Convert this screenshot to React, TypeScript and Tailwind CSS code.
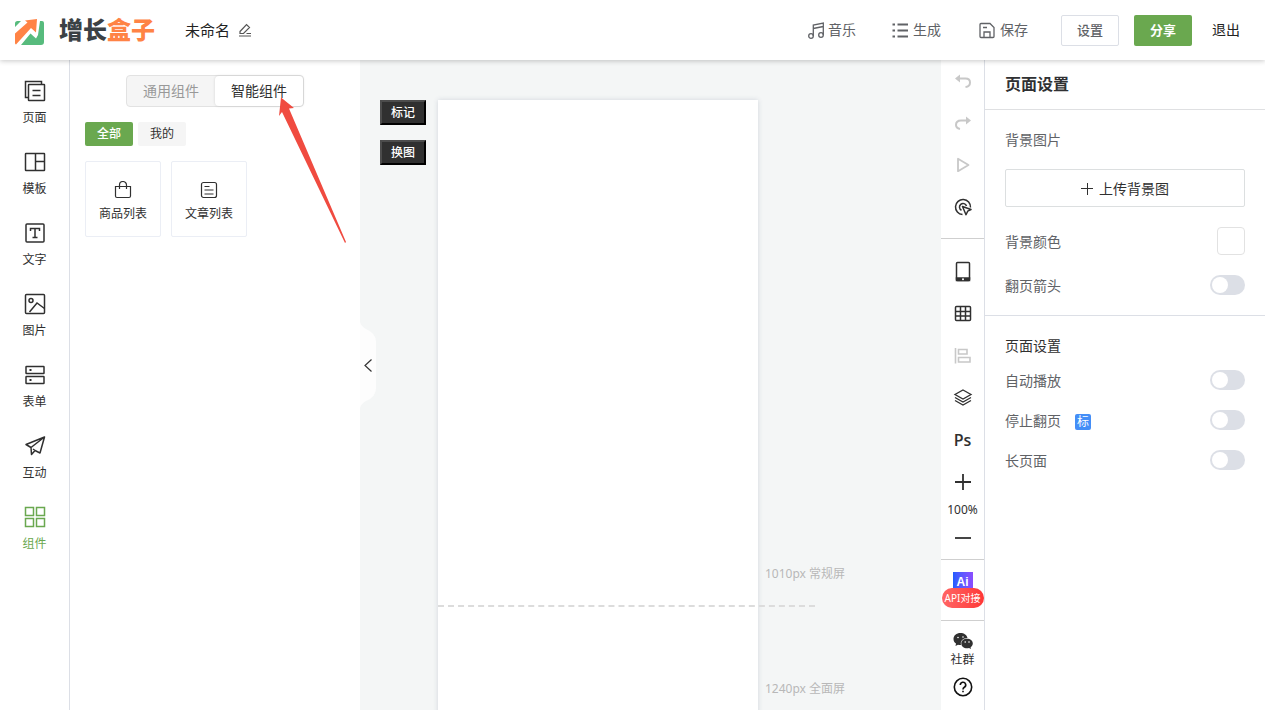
import type { ReactNode } from "react";
import clsx from "clsx";

interface IconProps {
  className?: string;
  box?: number;
  width?: number;
  children: ReactNode;
}

function Icon({ className = "size-5", box = 20, width = 1.5, children }: IconProps) {
  return (
    <svg
      viewBox={`0 0 ${box} ${box}`}
      className={clsx("shrink-0", className)}
      fill="none"
      stroke="currentColor"
      strokeWidth={width}
      aria-hidden="true"
    >
      {children}
    </svg>
  );
}

const NAV_ITEMS: { label: string; icon: ReactNode }[] = [
  {
    label: "页面",
    icon: (
      <>
        <path d="M17.5 4V1.5h-16v16H4" />
        <rect x="4.5" y="4.5" width="16" height="16" rx="0.5" />
        <path d="M8.5 10.5h8M8.5 15.5h8" />
      </>
    ),
  },
  {
    label: "模板",
    icon: (
      <>
        <rect x="1.5" y="2.5" width="19" height="17" rx="0.5" />
        <path d="M11.5 2.5v17M11.5 10.5h9" />
      </>
    ),
  },
  {
    label: "文字",
    icon: (
      <>
        <rect x="2" y="2" width="18" height="18" rx="1" />
        <path d="M6.5 9V6.5h9V9M11 6.5v9M8.5 15.5h5" />
      </>
    ),
  },
  {
    label: "图片",
    icon: (
      <>
        <rect x="1.5" y="1.5" width="19" height="19" rx="1" />
        <circle cx="7" cy="7.5" r="2" />
        <path d="M5.5 19l7.5-9 7.5 5.5" />
      </>
    ),
  },
  {
    label: "表单",
    icon: (
      <>
        <rect x="2" y="2.5" width="18" height="7" rx="0.5" />
        <rect x="2" y="12.5" width="18" height="7" rx="0.5" />
        <path d="M5.5 6h2M5.5 16h2" strokeWidth="2" />
      </>
    ),
  },
  {
    label: "互动",
    icon: (
      <path
        d="M20.5 2L2 9.5l5 3 .5 7 3.500-4 5 2.500 4.500-16L7 12.500M11 15.500l-2-1.500"
        strokeLinejoin="round"
      />
    ),
  },
  {
    label: "组件",
    icon: (
      <>
        <rect x="1.5" y="1.5" width="8" height="8" />
        <rect x="12.5" y="1.5" width="8" height="8" />
        <rect x="1.5" y="12.5" width="8" height="8" />
        <rect x="12.5" y="12.5" width="8" height="8" />
      </>
    ),
  },
];

function Header() {
  return (
    <header className="relative z-10 flex h-[60px] shrink-0 items-center bg-white pr-[25px] pl-[15px] shadow-[0_1px_5px_rgba(0,0,0,0.22)]">
      <svg viewBox="0 0 30 28" className="mt-1 h-7 w-[30px]" aria-hidden="true">
        <path
          d="M0 5.500Q0 3 2.500 3H6L0 9zM25 3h2q2 0 2 2v19q0 3-3 3H6l9.500-11.500 5.500 5 2-3.500z"
          fill="#57bb7d"
        />
        <path d="M10 2.500L22 1l-1 13.500-5-4.500L1 26.500Q0 26 0 25v-9.500L12.500 4.500z" fill="#ff8345" />
      </svg>
      <h1 className="ml-[14px] text-2xl font-black text-[#3b4145]">
        增长<span className="text-[#ff8345]">盒子</span>
      </h1>
      <span className="ml-[30px] text-[15px] text-[#222]">未命名</span>
      <button type="button" aria-label="重命名" className="ml-2 text-[#555]">
        <Icon className="size-[14px]" box={14} width={1.2}>
          <path d="M2 8.500l6.500-7 3 3L5.500 10.500H2zM1 13h12M8.500 10.500H13" />
        </Icon>
      </button>

      <div className="ml-auto flex items-center text-sm text-[#606266]">
        <button type="button" className="flex items-center gap-[3px]">
          <Icon className="size-[17px]" box={17} width={1.3}>
            <circle cx="3" cy="14" r="2.3" />
            <circle cx="13" cy="13" r="2.3" />
            <path d="M5.300 14V3l10-2v12M5.300 6.500l10-2" />
          </Icon>
          音乐
        </button>
        <button type="button" className="ml-9 flex items-center gap-1">
          <Icon className="size-[17px]" box={17} width={2}>
            <path d="M5.500 2.500H16M5.500 8.500H16M5.500 14.500H16M.5 2.500h2.500M.5 8.500h2.500M.5 14.500h2.500" />
          </Icon>
          生成
        </button>
        <button type="button" className="ml-[38px] flex items-center gap-1">
          <Icon className="size-[17px]" box={17} width={1.3}>
            <path d="M2 1.500h9l4 4v9q0 1-1 1H2q-1 0-1-1v-12q0-1 1-1zM5 15.500V10h6v5.500M4 5.500h4" />
          </Icon>
          保存
        </button>
        <button
          type="button"
          className="ml-[33px] h-[31px] w-[58px] rounded-xs border border-[#dcdfe6] bg-white text-[13px] font-medium"
        >
          设置
        </button>
        <button
          type="button"
          className="ml-[15px] h-[31px] w-[58px] rounded-xs bg-[#6aa84f] text-[13px] font-bold text-white"
        >
          分享
        </button>
        <a href="#logout" className="ml-5 text-[#222]">
          退出
        </a>
      </div>
    </header>
  );
}

function SideNav() {
  return (
    <nav className="flex w-[70px] shrink-0 flex-col gap-6 border-r border-[#dcdfe6] bg-white pt-5">
      {NAV_ITEMS.map((item) => (
        <button
          key={item.label}
          type="button"
          className={clsx(
            "flex flex-col items-center gap-[7px] text-xs leading-[18px]",
            item.label === "组件" ? "text-[#6aa84f]" : "text-[#303030]",
          )}
        >
          <Icon className="size-[22px]" box={22}>
            {item.icon}
          </Icon>
          {item.label}
        </button>
      ))}
    </nav>
  );
}

function ComponentCard({ label, children }: { label: string; children: ReactNode }) {
  return (
    <button
      type="button"
      className="flex size-[76px] flex-col items-center justify-center gap-[6px] rounded-xs border border-[#ebeef5] pt-[6px] text-xs leading-[18px] text-[#303030]"
    >
      <Icon className="size-[18px]" box={18} width={1.2}>
        {children}
      </Icon>
      {label}
    </button>
  );
}

function ComponentPanel() {
  return (
    <section className="relative w-[290px] shrink-0 bg-white px-[15px] pt-[15px]">
      <div className="mx-auto flex h-8 w-[178px] rounded-sm border border-[#e2e2e2] bg-[#f5f5f5] text-sm">
        <button type="button" className="flex-1 text-[#999]">
          通用组件
        </button>
        <button type="button" className="flex-1 rounded-sm bg-white text-[#303030] shadow-[0_0_3px_rgba(0,0,0,0.14)]">
          智能组件
        </button>
      </div>
      <div className="mt-[15px] flex gap-[5px] text-xs">
        <button type="button" className="h-6 w-12 rounded-xs bg-[#6aa84f] font-medium text-white">
          全部
        </button>
        <button type="button" className="h-6 w-12 rounded-xs bg-[#f5f5f5] text-[#303030]">
          我的
        </button>
      </div>
      <div className="mt-[15px] flex gap-[10px]">
        <ComponentCard label="商品列表">
          <path d="M1.500 5.500h15V15q0 1.500-1.500 1.500H3q-1.500 0-1.500-1.500zM5.500 8V4a3.500 3.500 0 0 1 7 0v4" />
        </ComponentCard>
        <ComponentCard label="文章列表">
          <rect x="1.5" y="1.5" width="15" height="15" rx="2" />
          <path d="M4.500 5.500h5M4.500 9h9M4.500 13h9" />
        </ComponentCard>
      </div>
      <svg
        viewBox="0 0 68 146"
        className="absolute top-[37px] left-[208px] z-10 h-[146px] w-[68px]"
        fill="#f04b40"
        aria-hidden="true"
      >
        <path d="M3 .5L16 11l-5 .5L68 145l-1 1L4 15l-3 4z" />
      </svg>
    </section>
  );
}

const PAGE_BUTTON =
  "h-[25px] w-[46px] border-2 border-t-[#4c4c4c] border-r-black border-b-black border-l-[#4c4c4c] bg-[#303030]";

function Canvas() {
  return (
    <main className="relative flex min-w-0 flex-1 items-start overflow-hidden bg-[#f4f6f6] pt-10 pl-5">
      <button
        type="button"
        aria-label="收起面板"
        className="absolute top-[262px] left-0 h-[86px] w-4 text-[#333]"
      >
        <svg viewBox="0 0 16 86" className="h-full w-full" fill="none">
          <path d="M0 0q1 4 6 7 10 4 10 13v46q0 9-10 13-5 3-6 7z" fill="#fdfdfd" />
          <path d="M11.500 37.500L5 43.500l6.500 6" stroke="currentColor" strokeWidth="1.2" />
        </svg>
      </button>
      <div className="flex flex-col gap-[15px] text-xs leading-[22px] font-medium text-white">
        <button type="button" className={PAGE_BUTTON}>
          标记
        </button>
        <button type="button" className={PAGE_BUTTON}>
          换图
        </button>
      </div>
      <div className="relative ml-3 h-[620px] w-[320px] shrink-0 bg-white shadow-[0_0_5px_rgba(60,70,110,0.18)]">
        <div className="absolute top-[505px] left-0 w-[377px] border-t-2 border-dashed border-[#dcdcdc]" />
      </div>
      <div className="flex flex-col gap-[95px] pt-[464px] pl-[7px] text-xs leading-5 text-[#b8b8b8]">
        <span>1010px 常规屏</span>
        <span>1240px 全面屏</span>
      </div>
    </main>
  );
}

interface ToolProps {
  label: string;
  muted?: boolean;
  children: ReactNode;
}

function Tool({ label, muted, children }: ToolProps) {
  return (
    <button
      type="button"
      aria-label={label}
      className={clsx("flex h-[42px] w-full items-center justify-center", muted ? "text-[#c8c8c8]" : "text-[#303030]")}
    >
      {children}
    </button>
  );
}

function Toolbar() {
  return (
    <aside className="flex w-11 shrink-0 flex-col border-r border-[#dcdfe6] bg-white">
      <div className="border-b border-[#cfcfcf] pt-px pb-[9px]">
        <Tool label="撤销" muted>
          <Icon width={2}>
            <path d="M6 6.500h6.500q4.500 0 4.500 4t-4.500 4.500" />
            <path d="M7 2.500v8L2 6.500z" fill="currentColor" stroke="none" />
          </Icon>
        </Tool>
        <Tool label="重做" muted>
          <Icon width={2}>
            <path d="M14 6.500H8q-5 0-5 4.500 0 3 4 4" />
            <path d="M13 2.500v8l5-4z" fill="currentColor" stroke="none" />
          </Icon>
        </Tool>
        <Tool label="预览" muted>
          <Icon width={1.8}>
            <path d="M5 2.800v12.400L15.500 9z" strokeLinejoin="round" />
          </Icon>
        </Tool>
        <Tool label="点击">
          <Icon>
            <path
              d="M9.500 16.500A7.500 7.500 0 1 1 17.500 9.500M8.500 12.300A3.600 3.600 0 1 1 13.500 8M9.500 8.500l8.500 3-3.300 1.700-1.700 3.600z"
              strokeLinejoin="round"
            />
          </Icon>
        </Tool>
      </div>
      <div className="border-b border-[#cfcfcf] pt-3">
        <Tool label="手机">
          <Icon className="size-[22px]" box={22}>
            <rect x="4.5" y="1.5" width="13" height="18" rx="1" />
            <path d="M4.500 17h13v2.500h-13z" fill="currentColor" />
            <circle cx="11" cy="18.2" r="1" fill="#fff" stroke="none" />
          </Icon>
        </Tool>
        <Tool label="网格">
          <Icon>
            <rect x="2.5" y="2.5" width="15" height="14" rx="1" />
            <path d="M7.500 2.500v14M12.500 2.500v14M2.500 7.500h15M2.500 12h15" />
          </Icon>
        </Tool>
        <Tool label="对齐" muted>
          <Icon width={1.6}>
            <path d="M2.500 2v15.500M5.500 3.500H14v4.500H5.500zM5.500 11.500H17V16H5.500z" />
          </Icon>
        </Tool>
        <Tool label="图层">
          <Icon width={1.3}>
            <path d="M10 2l8 4.500-8 4.500-8-4.500zM2 9.500l8 4.500 8-4.500M2 12.500l8 4.500 8-4.500" />
          </Icon>
        </Tool>
        <Tool label="Photoshop">
          <span className="font-['Open_Sans',sans-serif] text-base leading-none font-semibold">Ps</span>
        </Tool>
        <Tool label="放大">
          <Icon width={1.8}>
            <path d="M2 10h16M10 2v16" />
          </Icon>
        </Tool>
        <div className="text-center text-xs leading-[14px] text-[#303030]">100%</div>
        <Tool label="缩小">
          <Icon width={1.8}>
            <path d="M2 10h16" />
          </Icon>
        </Tool>
      </div>
      <button type="button" className="flex flex-col items-center border-b border-[#cfcfcf] py-3">
        <span className="h-4 w-5 bg-linear-to-r from-[#1d5cff] to-[#8a4dff] pt-[3px] text-center font-['Liberation_Sans',sans-serif] text-xs leading-[14px] font-bold text-white">
          Ai
        </span>
        <span className="h-5 w-[42px] rounded-full bg-linear-to-r from-[#ff6464] to-[#ff3636] text-center text-[10px] leading-5 whitespace-nowrap text-white">
          API对接
        </span>
      </button>
      <button type="button" className="flex flex-col items-center pt-[10px] text-xs leading-[18px] text-[#303030]">
        <svg viewBox="0 0 20 20" className="size-5" aria-hidden="true">
          <path
            d="M7.500 2C3.400 2 .5 4.600.5 8c0 2 1 3.500 2.500 4.600L2.500 15l2.500-1.300c1 .3 2 .4 3 .3-1-4 2-7 6.500-7C14 4 11 2 7.500 2z"
            fill="#303030"
          />
          <path
            d="M14 7.800c-3.300 0-5.700 2-5.700 4.700s2.500 4.800 5.700 4.800c.7 0 1.400-.1 2-.3l2 1-.4-1.800c1.400-1 2.200-2.200 2.200-3.700 0-2.700-2.500-4.700-5.800-4.700z"
            fill="#303030"
          />
          <g fill="#fff">
            <circle cx="5" cy="6.5" r=".8" />
            <circle cx="10" cy="6" r=".8" />
            <circle cx="12.2" cy="11" r=".8" />
            <circle cx="16" cy="11" r=".8" />
          </g>
        </svg>
        社群
      </button>
      <button type="button" aria-label="帮助" className="mt-2 flex justify-center text-[#111]">
        <Icon width={1.6}>
          <circle cx="10" cy="10" r="8.7" />
          <path d="M7.300 8a2.700 2.700 0 1 1 4 2.300q-1.300.8-1.300 2.200M10 13.700v1.600" />
        </Icon>
      </button>
    </aside>
  );
}

function SwitchRow({ id, label, badge }: { id: string; label: string; badge?: string }) {
  return (
    <div className="flex h-5 items-center">
      <label htmlFor={id} className="pt-[2px] text-[#606266]">
        {label}
      </label>
      {badge && (
        <span className="mt-1 ml-[14px] size-4 rounded-xs bg-[#448ef7] text-center text-xs leading-4 text-white">
          {badge}
        </span>
      )}
      <input
        id={id}
        type="checkbox"
        role="switch"
        className="ml-auto h-5 w-[35px] appearance-none rounded-full bg-[#dcdfe6] p-[2px] before:block before:size-4 before:rounded-full before:bg-white checked:bg-[#6aa84f] checked:before:ml-auto"
      />
    </div>
  );
}

function SettingsPanel() {
  return (
    <aside className="w-[280px] shrink-0 bg-white text-sm leading-5">
      <h2 className="h-[50px] border-b border-[#dfe0e2] px-5 text-base leading-[49px] font-bold text-[#303133]">
        页面设置
      </h2>
      <div className="flex flex-col gap-5 border-b border-[#dcdfe6] px-5 py-5">
        <span className="text-[#606266]">背景图片</span>
        <button
          type="button"
          className="-mt-px flex h-[38px] items-center justify-center gap-[6px] rounded-xs border border-[#dcdfe0] pt-px text-[#303030]"
        >
          <Icon className="size-3" box={12} width={1}>
            <path d="M0 5.500h12M6.500 0v12" />
          </Icon>
          上传背景图
        </button>
        <div className="flex items-center justify-between">
          <label htmlFor="background-color" className="pt-[2px] text-[#606266]">
            背景颜色
          </label>
          <input
            id="background-color"
            type="color"
            defaultValue="#ffffff"
            className="size-7 appearance-none rounded-sm border border-[#e2e2e2] bg-white p-1 [&::-webkit-color-swatch]:border-0"
          />
        </div>
        <SwitchRow id="page-arrow" label="翻页箭头" />
      </div>
      <div className="flex flex-col gap-5 px-5 pt-5">
        <h3 className="-mb-[6px] text-[#303030]">页面设置</h3>
        <SwitchRow id="auto-play" label="自动播放" />
        <SwitchRow id="stop-paging" label="停止翻页" badge="标" />
        <SwitchRow id="long-page" label="长页面" />
      </div>
    </aside>
  );
}

export default function App() {
  return (
    <div className="flex h-screen flex-col overflow-hidden bg-white font-['Noto_Sans','Noto_Sans_CJK_SC',sans-serif]">
      <Header />
      <div className="flex min-h-0 flex-1">
        <SideNav />
        <ComponentPanel />
        <Canvas />
        <Toolbar />
        <SettingsPanel />
      </div>
    </div>
  );
}
